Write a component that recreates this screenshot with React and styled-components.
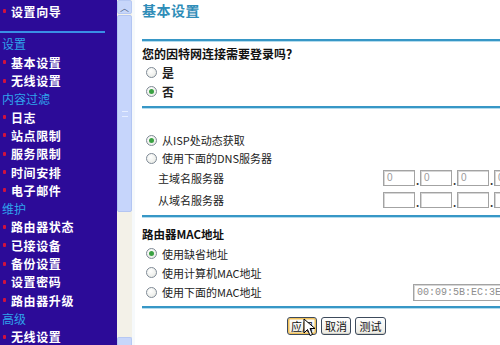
import React from "react";
import styled, { createGlobalStyle } from "styled-components";

const Global = createGlobalStyle`
  html, body { margin: 0; padding: 0; background: #fff; }
  body { width: 500px; height: 345px; overflow: hidden; font-family: "Noto Sans CJK SC", "Noto Sans", sans-serif; }
`;

const Page = styled.div`
  display: flex;
  width: 500px;
  height: 345px;
  overflow: hidden;
`;

const Sidebar = styled.nav`
  width: 117px;
  flex: none;
  background: #2c0b98;
  padding-top: 2px;
  box-sizing: border-box;
`;

const NavItem = styled.div`
  display: flex;
  align-items: center;
  height: 18.3px;
  padding-left: ${(p) => (p.$header ? 2 : 3)}px;
  font-size: 12px;
  font-weight: ${(p) => (p.$header ? 400 : 700)};
  color: ${(p) => (p.$header ? "#2fa4ec" : "#ffffff")};
  letter-spacing: ${(p) => (p.$header ? 0 : 0.6)}px;
  white-space: nowrap;
`;

const Bullet = styled.span`
  width: 3px;
  height: 4px;
  background: #d0123e;
  border-radius: 1px;
  margin-right: 5px;
`;

const NavRule = styled.div`
  height: 2px;
  width: 105px;
  background: #3a8fe6;
  margin: 11px 0 1.5px;
`;

const Scrollbar = styled.div`
  width: 15px;
  flex: none;
  background: #f3f1e8;
  display: flex;
  flex-direction: column;
  border-right: 3px solid #f6f9fb;
`;

const ScrollBtn = styled.div`
  height: 14px;
  background: #c7d6fa;
  border: 1px solid #b6c8f3;
  border-radius: 2px;
  box-sizing: border-box;
  display: flex;
  align-items: center;
  justify-content: center;
  color: #4d6185;
  font-size: 9px;
  line-height: 1;
`;

const Thumb = styled.div`
  margin-top: 1px;
  height: 197px;
  background: #c6d5fb;
  border: 1px solid #b3c5f2;
  border-radius: 2px;
  box-sizing: border-box;
  display: flex;
  align-items: center;
  justify-content: center;
`;

const Grip = styled.div`
  width: 6px;
  height: 4px;
  border-top: 1px solid #e6eeff;
  border-bottom: 1px solid #e6eeff;
`;

const Track = styled.div`
  flex: 1;
`;

const BottomBtn = styled(ScrollBtn)`
  height: 8px;
  border-bottom: none;
  border-radius: 2px 2px 0 0;
`;

const Main = styled.main`
  flex: 1;
  padding-left: 7px;
  position: relative;
  min-width: 0;
  overflow: hidden;
`;

const Title = styled.h1`
  margin: 0;
  height: 39px;
  line-height: 20px;
  font-size: 14px;
  font-weight: 700;
  color: #2f8db8;
  letter-spacing: 0.5px;
`;

const Rule = styled.div`
  height: 2px;
  background: #3797c6;
  box-shadow: 0 1px 0 #b4dcee;
  margin-top: ${(p) => p.$mt || 0}px;
`;

const Question = styled.div`
  height: 19px;
  line-height: 19px;
  margin-top: 3px;
  font-size: 12px;
  font-weight: 700;
  color: #111;
`;

const Heading = styled.div`
  height: 18px;
  line-height: 18px;
  margin-top: ${(p) => p.$mt || 0}px;
  font-size: 11.5px;
  font-weight: 700;
  color: #111;
`;

const Option = styled.label`
  display: flex;
  align-items: center;
  height: ${(p) => p.$h || 19}px;
  padding-left: 4px;
  margin-top: ${(p) => p.$mt || 0}px;
  font-size: ${(p) => (p.$small ? 11 : 12)}px;
  font-weight: ${(p) => (p.$bold ? 700 : 400)};
  color: #222;
  gap: 5px;
`;

const Radio = styled.span`
  width: 11px;
  height: 11px;
  border-radius: 50%;
  border: 1px solid #7f8a96;
  background: radial-gradient(circle at 40% 35%, #ffffff 0%, #e4e6e0 100%);
  box-sizing: border-box;
  display: flex;
  align-items: center;
  justify-content: center;
  flex: none;
  &::after {
    content: "";
    width: 5px;
    height: 5px;
    border-radius: 50%;
    background: ${(p) => (p.$checked ? "#3aa142" : "transparent")};
  }
`;

const Spacer = styled.div`
  flex: 1;
`;

const ServerRow = styled.div`
  display: flex;
  align-items: center;
  height: ${(p) => p.$h}px;
  padding-left: 16px;
  font-size: 11px;
  color: #222;
`;

const ServerLabel = styled.span`
  width: 225px;
  flex: none;
`;

const IpGroup = styled.div`
  display: flex;
  align-items: flex-end;
  gap: 1px;
`;

const IpBox = styled.div`
  width: 32px;
  height: 16px;
  flex: none;
  box-sizing: border-box;
  border: 1px solid #a3a3a3;
  box-shadow: inset 1px 1px 0 #d6d6d6;
  background: #fff;
  font-family: "Liberation Sans", sans-serif;
  font-size: 10px;
  color: #9a9a9a;
  padding-left: 3px;
  line-height: 14px;
`;

const Dot = styled.span`
  width: 3px;
  flex: none;
  font-size: 10px;
  font-weight: 700;
  line-height: 10px;
  color: #333;
  text-align: center;
`;

const MacInput = styled.div`
  width: 95px;
  height: 17px;
  flex: none;
  box-sizing: border-box;
  border: 1px solid #a3a3a3;
  box-shadow: inset 1px 1px 0 #d6d6d6;
  font-family: "Liberation Mono", monospace;
  font-size: 10px;
  line-height: 15px;
  color: #8e8e8e;
  padding-left: 3px;
  white-space: nowrap;
  overflow: hidden;
  margin-right: -8px;
`;

const Buttons = styled.div`
  display: flex;
  gap: 4px;
  margin-top: 9px;
  padding-left: 145px;
  position: relative;
`;

const Button = styled.button`
  height: 18px;
  width: ${(p) => p.$w || 30}px;
  padding: 0;
  border: 1px solid #3d4a5c;
  border-radius: 3px;
  background: linear-gradient(#ffffff, #ecebe4);
  box-shadow: ${(p) => (p.$focus ? "inset 0 0 0 1.5px #f2c25a" : "inset 0 -1px 0 #d5d3c8")};
  font-family: "Noto Sans CJK SC", sans-serif;
  font-size: 11px;
  line-height: 16px;
  color: #111;
`;

const Cursor = styled.svg`
  position: absolute;
  left: 161px;
  top: 1px;
  width: 13px;
  height: 20px;
`;

const navItems = [
  ["设置向导"],
  "rule",
  ["设置", true],
  ["基本设置"],
  ["无线设置"],
  ["内容过滤", true],
  ["日志"],
  ["站点限制"],
  ["服务限制"],
  ["时间安排"],
  ["电子邮件"],
  ["维护", true],
  ["路由器状态"],
  ["已接设备"],
  ["备份设置"],
  ["设置密码"],
  ["路由器升级"],
  ["高级", true],
  ["无线设置"],
];

export default function App() {
  return (
    <Page>
      <Global />
      <Sidebar>
        {navItems.map((it, i) =>
          it === "rule" ? (
            <NavRule key={i} />
          ) : (
            <NavItem key={i} $header={it[1]}>
              {!it[1] && <Bullet />}
              {it[0]}
            </NavItem>
          )
        )}
      </Sidebar>
      <Scrollbar>
        <ScrollBtn>︿</ScrollBtn>
        <Thumb>
          <Grip />
        </Thumb>
        <Track />
        <BottomBtn />
      </Scrollbar>
      <Main>
        <Title>基本设置</Title>
        <Rule />
        <Question>您的因特网连接需要登录吗？</Question>
        <Option $bold>
          <Radio />是
        </Option>
        <Option $bold>
          <Radio $checked />否
        </Option>
        <Rule $mt={5} />
        <Option $small $h={18} $mt={23}>
          <Radio $checked />从ISP处动态获取
        </Option>
        <Option $small $h={18}>
          <Radio />使用下面的DNS服务器
        </Option>
        <ServerRow $h={22}>
          <ServerLabel>主域名服务器</ServerLabel>
          <IpGroup>
            <IpBox>0</IpBox>
            <Dot>.</Dot>
            <IpBox>0</IpBox>
            <Dot>.</Dot>
            <IpBox>0</IpBox>
            <Dot>.</Dot>
            <IpBox>0</IpBox>
          </IpGroup>
        </ServerRow>
        <ServerRow $h={21}>
          <ServerLabel>从域名服务器</ServerLabel>
          <IpGroup>
            <IpBox />
            <Dot>.</Dot>
            <IpBox />
            <Dot>.</Dot>
            <IpBox />
            <Dot>.</Dot>
            <IpBox />
          </IpGroup>
        </ServerRow>
        <Rule $mt={5} />
        <Heading $mt={8}>路由器MAC地址</Heading>
        <Option $small $h={19} $mt={1}>
          <Radio $checked />使用缺省地址
        </Option>
        <Option $small $h={19}>
          <Radio />使用计算机MAC地址
        </Option>
        <Option $small $h={20}>
          <Radio />使用下面的MAC地址
          <Spacer />
          <MacInput>00:09:5B:EC:3E:1A</MacInput>
        </Option>
        <Rule $mt={4} />
        <Buttons>
          <Button $focus>应用</Button>
          <Button>取消</Button>
          <Button $w={31}>测试</Button>
          <Cursor viewBox="0 0 13 20">
            <path d="M1 1 L1 15 L4.5 11.5 L7 17.5 L9.5 16.5 L7 10.5 L12 10.5 Z" fill="#fff" stroke="#000" strokeWidth="1" strokeLinejoin="round" />
          </Cursor>
        </Buttons>
      </Main>
    </Page>
  );
}
